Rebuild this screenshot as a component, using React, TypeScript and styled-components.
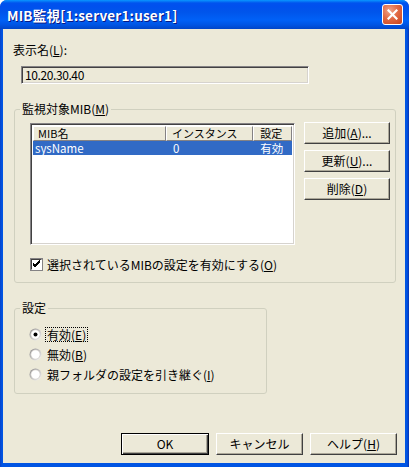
import React from "react";
import styled, { createGlobalStyle } from "styled-components";

const GlobalStyle = createGlobalStyle`
  html, body { margin: 0; padding: 0; background: #fff; }
  body { font-family: "Noto Sans CJK JP", "Noto Sans", sans-serif; font-size: 12px; }
`;

const FONT = `"Noto Sans CJK JP", "Noto Sans", sans-serif`;

const Window = styled.div`
  width: 409px;
  height: 467px;
  display: flex;
  flex-direction: column;
  background: linear-gradient(to right, #0842C8 0px, #0054E3 2px, #0054E3 calc(100% - 2px), #0831B0 100%);
  border-radius: 7px 7px 0 0;
  overflow: hidden;
  box-sizing: border-box;
  font-family: ${FONT};
`;

const TitleBar = styled.div`
  height: 29px;
  flex: none;
  display: flex;
  align-items: center;
  justify-content: space-between;
  padding: 0 6px 0 7px;
  box-sizing: border-box;
  background: linear-gradient(
    to bottom,
    #0997FF 0px,
    #0053EE 3px,
    #0050EE 6px,
    #0055EB 12px,
    #0061F7 20px,
    #0054E3 25px,
    #0145C7 29px
  );
`;

const Title = styled.span`
  color: #fff;
  font-weight: bold;
  font-size: 13.5px;
  letter-spacing: 0.2px;
  text-shadow: 1px 1px 0 #0A1883;
  line-height: 16px;
`;

const CloseButton = styled.div`
  width: 21px;
  height: 21px;
  box-sizing: border-box;
  border: 1px solid #fff;
  border-radius: 3px;
  background: radial-gradient(circle at 35% 30%, #F0A48A 0%, #E26A45 45%, #C8421B 100%);
  display: flex;
  align-items: center;
  justify-content: center;
`;

const Client = styled.div`
  flex: 1;
  margin: 0 4px 4px 3px;
  background: #ECE9D8;
  display: flex;
  flex-direction: column;
  padding: 14px 8px 8px 11px;
  box-sizing: border-box;
  color: #000;
`;

const Label = styled.div`
  line-height: 14px;
  height: 14px;
  margin-left: -1px;
`;

const TextBox = styled.div`
  margin: 9px 0 0 7px;
  width: 288px;
  height: 18px;
  box-sizing: border-box;
  border: 1px solid;
  border-color: #848284 #fff #fff #848284;
  box-shadow: inset 1px 1px 0 #424142, inset -1px -1px 0 #D6D3CE;
  background: #ECE9D8;
  padding: 0 3px;
  line-height: 16px;
  font-size: 12px;
  letter-spacing: -0.4px;
`;

const GroupBox = styled.fieldset<{ $width: number; $top: number }>`
  margin: ${(p) => p.$top}px 0 0 0;
  width: ${(p) => p.$width}px;
  box-sizing: border-box;
  border: 1px solid #D0D0BF;
  border-radius: 3px;
  padding: 0;
  min-width: 0;
`;

const Legend = styled.legend`
  padding: 0 2px;
  margin-left: 5px;
  line-height: 14px;
  font-size: 12px;
`;

const GroupInner = styled.div<{ $pad: string }>`
  padding: ${(p) => p.$pad};
  display: flex;
  flex-direction: column;
`;

const ListArea = styled.div`
  display: flex;
  align-items: flex-start;
  gap: 9px;
`;

const ListView = styled.div`
  width: 265px;
  height: 122px;
  box-sizing: border-box;
  border: 1px solid;
  border-color: #848284 #fff #fff #848284;
  box-shadow: inset 1px 1px 0 #424142, inset -1px -1px 0 #D6D3CE;
  background: #fff;
  padding: 2px;
  display: flex;
  flex-direction: column;
`;

const HeaderRow = styled.div`
  display: flex;
  height: 15px;
  flex: none;
`;

const HeaderCell = styled.div<{ $w: number; $pl: number }>`
  width: ${(p) => p.$w}px;
  box-sizing: border-box;
  background: #ECE9D8;
  border: 1px solid;
  border-color: #fff #848284 #848284 #fff;
  padding-left: ${(p) => p.$pl}px;
  line-height: 13px;
  font-size: 11px;
  white-space: nowrap;
  overflow: hidden;
`;

const DataRow = styled.div<{ $selected?: boolean }>`
  display: flex;
  height: 14px;
  background: ${(p) => (p.$selected ? "#316AC5" : "transparent")};
  color: ${(p) => (p.$selected ? "#fff" : "#000")};
`;

const DataCell = styled.div<{ $w: number; $pl: number }>`
  width: ${(p) => p.$w}px;
  box-sizing: border-box;
  padding-left: ${(p) => p.$pl}px;
  line-height: 14px;
  font-size: 11.5px;
  white-space: nowrap;
`;

const ButtonColumn = styled.div`
  display: flex;
  flex-direction: column;
  gap: 6px;
  margin-top: -1px;
`;

const Button = styled.button<{ $w: number; $default?: boolean }>`
  width: ${(p) => p.$w}px;
  height: 22px;
  box-sizing: border-box;
  background: #ECE9D8;
  font-family: ${FONT};
  font-size: 12px;
  color: #000;
  padding: 0;
  line-height: 18px;
  text-align: center;
  border: 1px solid;
  border-color: ${(p) => (p.$default ? "#000" : "#fff #404040 #404040 #fff")};
  box-shadow: ${(p) =>
    p.$default
      ? "inset 1px 1px 0 #fff, inset -1px -1px 0 #404040, inset -2px -2px 0 #ACA899"
      : "inset -1px -1px 0 #ACA899"};
  cursor: default;
`;

const CheckRow = styled.div`
  display: flex;
  align-items: center;
  gap: 4px;
  margin-top: 13px;
  height: 13px;
  line-height: 13px;
`;

const RadioList = styled.div`
  display: flex;
  flex-direction: column;
`;

const RadioRow = styled.div`
  display: flex;
  align-items: center;
  gap: 3px;
  height: 20px;
`;

const RadioText = styled.span<{ $focus?: boolean }>`
  line-height: 13px;
  padding: 0 1px;
  border: 1px dotted ${(p) => (p.$focus ? "#000" : "transparent")};
`;

const Footer = styled.div`
  margin-top: auto;
  display: flex;
  justify-content: flex-end;
  gap: 7px;
`;

const Check = () => (
  <svg width="13" height="13" viewBox="0 0 13 13" style={{ flex: "none" }}>
    <rect x="0.5" y="0.5" width="12" height="12" fill="#fff" stroke="#848284" />
    <path d="M1 1.5H11.5M1.5 1V11.5" stroke="#424142" />
    <path d="M3 6 L5 8 L10 3 M3 7 L5 9 L10 4 M3 5 L5 7 L10 2" stroke="#000" fill="none" />
  </svg>
);

const Radio = ({ on }: { on?: boolean }) => (
  <svg width="13" height="13" viewBox="0 0 13 13" style={{ flex: "none" }}>
    <defs>
      <linearGradient id="rg" x1="0" y1="0" x2="1" y2="1">
        <stop offset="0" stopColor="#848284" />
        <stop offset="1" stopColor="#fff" />
      </linearGradient>
    </defs>
    <circle cx="6.5" cy="6.5" r="6" fill="url(#rg)" />
    <circle cx="6.5" cy="6.5" r="5" fill="#D6D3CE" />
    <circle cx="6.5" cy="6.5" r="4.2" fill="#fff" />
    {on && <circle cx="6.5" cy="6.5" r="2" fill="#000" />}
  </svg>
);

const cols = [134, 88, 39];

export default function App() {
  return (
    <>
      <GlobalStyle />
      <Window>
        <TitleBar>
          <Title>MIB監視[1:server1:user1]</Title>
          <CloseButton>
            <svg width="11" height="11" viewBox="0 0 11 11">
              <path d="M1.5 1.5 L9.5 9.5 M9.5 1.5 L1.5 9.5" stroke="#fff" strokeWidth="2.2" strokeLinecap="square" />
            </svg>
          </CloseButton>
        </TitleBar>
        <Client>
          <Label>
            表示名(<u>L</u>):
          </Label>
          <TextBox>10.20.30.40</TextBox>

          <GroupBox $width={382} $top={18}>
            <Legend>
              監視対象MIB(<u>M</u>)
            </Legend>
            <GroupInner $pad="7px 0 11px 15px">
              <ListArea>
                <ListView>
                  <HeaderRow>
                    <HeaderCell $w={cols[0]} $pl={4}>MIB名</HeaderCell>
                    <HeaderCell $w={cols[1]} $pl={5}>インスタンス</HeaderCell>
                    <HeaderCell $w={cols[2]} $pl={6}>設定</HeaderCell>
                  </HeaderRow>
                  <DataRow $selected>
                    <DataCell $w={cols[0]} $pl={2}>sysName</DataCell>
                    <DataCell $w={cols[1]} $pl={7}>0</DataCell>
                    <DataCell $w={cols[2]} $pl={7}>有効</DataCell>
                  </DataRow>
                </ListView>
                <ButtonColumn>
                  <Button $w={86}>
                    追加(<u>A</u>)...
                  </Button>
                  <Button $w={86}>
                    更新(<u>U</u>)...
                  </Button>
                  <Button $w={86}>
                    削除(<u>D</u>)
                  </Button>
                </ButtonColumn>
              </ListArea>
              <CheckRow>
                <Check />
                <span>
                  選択されているMIBの設定を有効にする(<u>O</u>)
                </span>
              </CheckRow>
            </GroupInner>
          </GroupBox>

          <GroupBox $width={253} $top={18}>
            <Legend>設定</Legend>
            <GroupInner $pad="9px 0 9px 14px">
              <RadioList>
                <RadioRow>
                  <Radio on />
                  <RadioText $focus>
                    有効(<u>E</u>)
                  </RadioText>
                </RadioRow>
                <RadioRow>
                  <Radio />
                  <RadioText>
                    無効(<u>B</u>)
                  </RadioText>
                </RadioRow>
                <RadioRow>
                  <Radio />
                  <RadioText>
                    親フォルダの設定を引き継ぐ(<u>I</u>)
                  </RadioText>
                </RadioRow>
              </RadioList>
            </GroupInner>
          </GroupBox>

          <Footer>
            <Button $w={88} $default>
              OK
            </Button>
            <Button $w={87}>キャンセル</Button>
            <Button $w={87}>
              ヘルプ(<u>H</u>)
            </Button>
          </Footer>
        </Client>
      </Window>
    </>
  );
}
